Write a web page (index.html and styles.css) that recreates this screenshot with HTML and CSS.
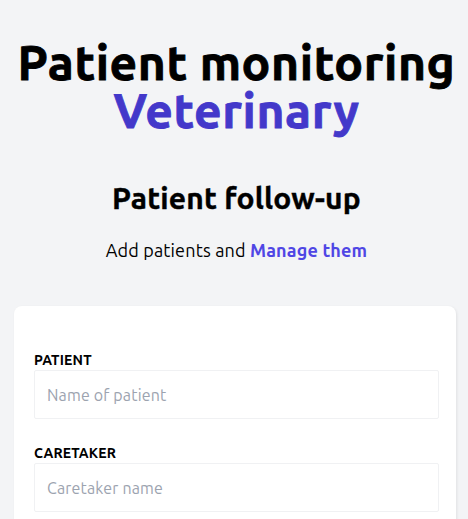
FILE: index.html
```html
<!DOCTYPE html>
<html lang="en">
<head>
<meta charset="utf-8">
<title>Patient monitoring Veterinary</title>
<link rel="stylesheet" href="styles.css">
</head>
<body>
<header class="hero">
  <h1 class="title">Patient monitoring <span class="title-accent">Veterinary</span></h1>
  <h2 class="subtitle">Patient follow-up</h2>
  <p class="lead">Add patients and <span class="lead-accent">Manage them</span></p>
</header>
<main class="card">
  <form class="form">
    <div class="field">
      <label class="label" for="patient">Patient</label>
      <input class="input" id="patient" type="text" placeholder="Name of patient">
    </div>
    <div class="field">
      <label class="label" for="caretaker">Caretaker</label>
      <input class="input" id="caretaker" type="text" placeholder="Caretaker name">
    </div>
  </form>
</main>
</body>
</html>
```
FILE: styles.css
```css
* { box-sizing: border-box; }
html, body { margin: 0; padding: 0; }
body {
  background: #f3f4f6;
  font-family: "Ubuntu", "Open Sans", "Noto Sans", sans-serif;
  color: #000;
  letter-spacing: 0.01em;
}
.hero {
  text-align: center;
  padding: 38px 0 0 5px;
}
.title {
  margin: 0;
  font-size: 48px;
  line-height: 1;
  font-weight: 700;
  letter-spacing: 0.012em;
  -webkit-text-stroke: 0.8px currentColor;
}
.title-accent {
  display: block;
  color: #4338ca;
}
.subtitle {
  margin: 46px 0 0;
  font-size: 30px;
  line-height: 36px;
  font-weight: 700;
  -webkit-text-stroke: 0.4px currentColor;
}
.lead {
  margin: 20px 0 0;
  font-size: 18px;
  line-height: 28px;
}
.lead-accent {
  color: #4f46e5;
  font-weight: 700;
}
.card {
  margin: 42px 12px 0 14px;
  background: #fff;
  border-radius: 8px;
  box-shadow: 1px 1px 3px rgba(0,0,0,0.08);
  padding: 44px 17px 20px 20px;
}
.form {
  display: flex;
  flex-direction: column;
  gap: 24px;
}
.field { display: flex; flex-direction: column; }
.label {
  font-size: 14px;
  line-height: 20px;
  font-weight: 700;
  text-transform: uppercase;
}
.input {
  width: 100%;
  height: 49px;
  border: 1px solid #f0f1f3;
  border-radius: 2px;
  padding: 0 12px;
  font-family: inherit;
  letter-spacing: inherit;
  font-size: 16px;
  background: #fff;
  outline: none;
}
.input::placeholder { color: #9ca3af; }
```
